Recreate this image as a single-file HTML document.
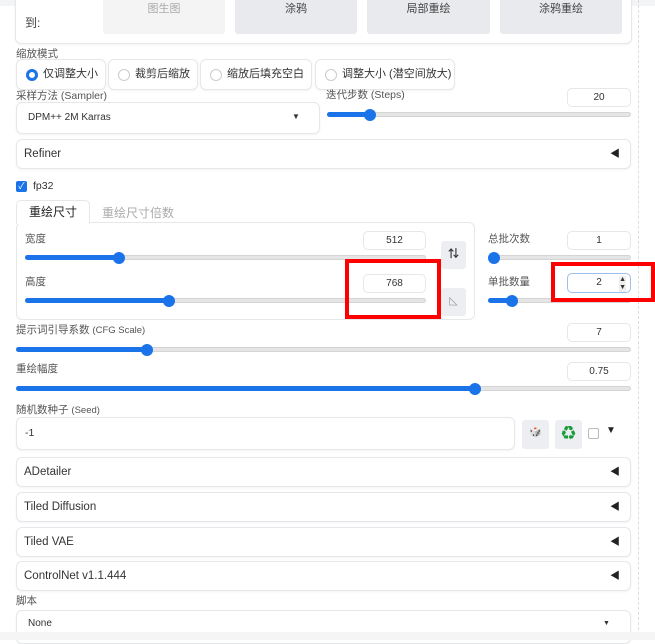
<!DOCTYPE html><html><head><meta charset="utf-8"><style>
*{box-sizing:border-box;margin:0;padding:0}
body{width:655px;height:640px;background:#fff;position:relative;overflow:hidden;font-family:"Liberation Sans","Noto Sans CJK SC",sans-serif;font-size:11px;color:#333}
.a{position:absolute}
.box{position:absolute;border:1px solid #e5e7eb;border-radius:6px;background:#fff;box-shadow:0 1px 2px rgba(0,0,0,.05)}
.lbl{position:absolute;color:#555;font-size:10.5px;white-space:nowrap}
.inp{position:absolute;border:1px solid #e5e7eb;border-radius:5px;background:#fff;text-align:center;font-size:10px;line-height:17px;color:#333}
.tr{position:absolute;height:5px;background:#e5e5e5;border:1px solid #d4d4d4;border-radius:3px}
.fl{position:absolute;height:5px;background:#1a73e8;border-radius:3px}
.th{position:absolute;width:12px;height:12px;border-radius:50%;background:#1a73e8}
.acc{position:absolute;left:16px;width:615px;border:1px solid #e5e7eb;border-radius:6px;font-size:11.5px;color:#333;padding-left:7px;box-shadow:0 1px 2px rgba(0,0,0,.05)}
.acc:after{content:"◀";position:absolute;right:10px;font-size:10px;color:#222}
.btn{position:absolute;background:#e9eaed;border-radius:3px;font-size:11px;color:#555;text-align:center;line-height:26px}
.rad{position:absolute;height:31px;border:1px solid #e5e7eb;border-radius:6px;line-height:29px;padding-left:26px;font-size:11px;color:#333;box-shadow:0 1px 2px rgba(0,0,0,.05)}
.rad:before{content:"";position:absolute;left:9px;top:9px;width:10px;height:10px;border:1px solid #ccc;border-radius:50%}
.rad.on:before{border:3px solid #1a73e8;width:6px;height:6px}
.red{position:absolute;border:4px solid #f00}
</style></head><body>
<div class="a" style="left:0;top:0;width:655px;height:6px;background:#f3f4f6"></div>
<div class="a" style="left:60px;top:0;width:175px;height:6px;background:#fff"></div>
<div class="a" style="left:638px;top:0;height:640px;border-left:1px dashed #ddd"></div>
<div class="box" style="left:15px;top:-6px;width:617px;height:50px"></div>
<div class="lbl" style="left:25px;top:14px;font-size:12px;color:#444">到:</div>
<div class="btn" style="left:103px;top:-2px;width:122px;height:36px;background:#f4f4f5;color:#aaa;line-height:22px">图生图</div>
<div class="btn" style="left:235px;top:-2px;width:122px;height:36px;color:#444;line-height:22px">涂鸦</div>
<div class="btn" style="left:367px;top:-2px;width:123px;height:36px;color:#444;line-height:22px">局部重绘</div>
<div class="btn" style="left:500px;top:-2px;width:122px;height:36px;color:#444;line-height:22px">涂鸦重绘</div>
<div class="lbl" style="left:16px;top:46px">缩放模式</div>
<div class="rad on" style="left:16px;top:59px;width:90px">仅调整大小</div>
<div class="rad" style="left:108px;top:59px;width:90px">裁剪后缩放</div>
<div class="rad" style="left:200px;top:59px;width:112px">缩放后填充空白</div>
<div class="rad" style="left:315px;top:59px;width:140px">调整大小 (潜空间放大)</div>
<div class="lbl" style="left:16px;top:88px">采样方法 (Sampler)</div>
<div class="box" style="left:16px;top:102px;width:304px;height:32px"></div>
<div class="lbl" style="left:28px;top:112px;color:#333;font-size:10px">DPM++ 2M Karras</div>
<div class="lbl" style="left:292px;top:112px;font-size:8px;color:#333">▼</div>
<div class="lbl" style="left:326px;top:87px">迭代步数 (Steps)</div>
<div class="inp" style="left:567px;top:88px;width:64px;height:19px">20</div>
<div class="tr" style="left:327px;top:112px;width:304px"></div><div class="fl" style="left:327px;top:112px;width:43px"></div><div class="th" style="left:364px;top:109px"></div>
<div class="acc" style="top:139px;height:30px;line-height:29px">Refiner</div>
<div class="a" style="left:16px;top:181px;width:11px;height:11px;background:#1a73e8;border-radius:2px;color:#fff;font-size:9px;line-height:11px;text-align:center">✓</div>
<div class="lbl" style="left:33px;top:180px;color:#333">fp32</div>
<div class="box" style="left:16px;top:222px;width:459px;height:98px;box-shadow:none"></div>
<div class="a" style="left:16px;top:200px;width:74px;height:24px;border:1px solid #e5e7eb;border-bottom:none;border-radius:5px 5px 0 0;background:#fff;font-size:12px;line-height:22px;text-align:center;color:#222">重绘尺寸</div>
<div class="lbl" style="left:102px;top:204px;font-size:12px;color:#aaa">重绘尺寸倍数</div>
<div class="lbl" style="left:25px;top:231px">宽度</div>
<div class="inp" style="left:363px;top:231px;width:63px;height:19px">512</div>
<div class="tr" style="left:25px;top:255px;width:401px"></div><div class="fl" style="left:25px;top:255px;width:94px"></div><div class="th" style="left:113px;top:252px"></div>
<div class="lbl" style="left:25px;top:274px">高度</div>
<div class="inp" style="left:363px;top:274px;width:63px;height:19px">768</div>
<div class="tr" style="left:25px;top:298px;width:401px"></div><div class="fl" style="left:25px;top:298px;width:144px"></div><div class="th" style="left:163px;top:295px"></div>
<div class="btn" style="left:441px;top:241px;width:25px;height:28px;background:#eceef1;color:#333;font-weight:bold;font-size:11px">⇅</div>
<div class="btn" style="left:441px;top:288px;width:25px;height:28px;background:#eceef1;color:#999">◺</div>
<div class="lbl" style="left:488px;top:231px">总批次数</div>
<div class="inp" style="left:567px;top:231px;width:64px;height:19px">1</div>
<div class="tr" style="left:488px;top:255px;width:143px"></div><div class="th" style="left:488px;top:252px"></div>
<div class="lbl" style="left:488px;top:274px">单批数量</div>
<div class="inp" style="left:567px;top:273px;width:64px;height:20px;border-color:#9cc0ee">2 <span style="position:absolute;right:4px;font-size:7px;line-height:8px;top:2px;background:#eee">▲<br>▼</span></div>
<div class="tr" style="left:488px;top:298px;width:143px"></div><div class="fl" style="left:488px;top:298px;width:22px"></div><div class="th" style="left:506px;top:295px"></div>
<div class="red" style="left:345px;top:259px;width:96px;height:60px"></div>
<div class="red" style="left:551px;top:262px;width:104px;height:40px"></div>
<div class="lbl" style="left:16px;top:322px">提示词引导系数 <span style="font-size:9.5px">(CFG Scale)</span></div>
<div class="inp" style="left:567px;top:323px;width:64px;height:19px">7</div>
<div class="tr" style="left:16px;top:347px;width:615px"></div><div class="fl" style="left:16px;top:347px;width:131px"></div><div class="th" style="left:141px;top:344px"></div>
<div class="lbl" style="left:16px;top:361px">重绘幅度</div>
<div class="inp" style="left:567px;top:362px;width:64px;height:19px">0.75</div>
<div class="tr" style="left:16px;top:386px;width:615px"></div><div class="fl" style="left:16px;top:386px;width:459px"></div><div class="th" style="left:469px;top:383px"></div>
<div class="lbl" style="left:16px;top:402px">随机数种子 <span style="font-size:9.5px">(Seed)</span></div>
<div class="box" style="left:16px;top:417px;width:499px;height:33px"></div>
<div class="lbl" style="left:25px;top:427px;color:#333">-1</div>
<div class="btn" style="left:522px;top:420px;width:27px;height:29px;background:#eceef1;color:#a77;font-size:10px">🎲</div>
<div class="btn" style="left:555px;top:420px;width:27px;height:29px;background:#eceef1;color:#1a9b3a;font-size:14px">♻</div>
<div class="a" style="left:588px;top:428px;width:11px;height:11px;border:1px solid #bbb;border-radius:2px"></div>
<div class="lbl" style="left:606px;top:425px;font-size:10px;color:#222">▼</div>
<div class="acc" style="top:457px;height:30px;line-height:29px">ADetailer</div>
<div class="acc" style="top:492px;height:30px;line-height:29px">Tiled Diffusion</div>
<div class="acc" style="top:527px;height:30px;line-height:29px">Tiled VAE</div>
<div class="acc" style="top:561px;height:30px;line-height:29px">ControlNet v1.1.444</div>
<div class="lbl" style="left:16px;top:593px">脚本</div>
<div class="box" style="left:16px;top:610px;width:615px;height:34px"></div>
<div class="lbl" style="left:28px;top:618px;color:#333;font-size:10px">None</div>
<div class="lbl" style="left:603px;top:620px;font-size:7px;color:#333">▼</div>
<div class="a" style="left:0;top:632px;width:655px;height:8px;background:#f5f5f6"></div>
</body></html>
